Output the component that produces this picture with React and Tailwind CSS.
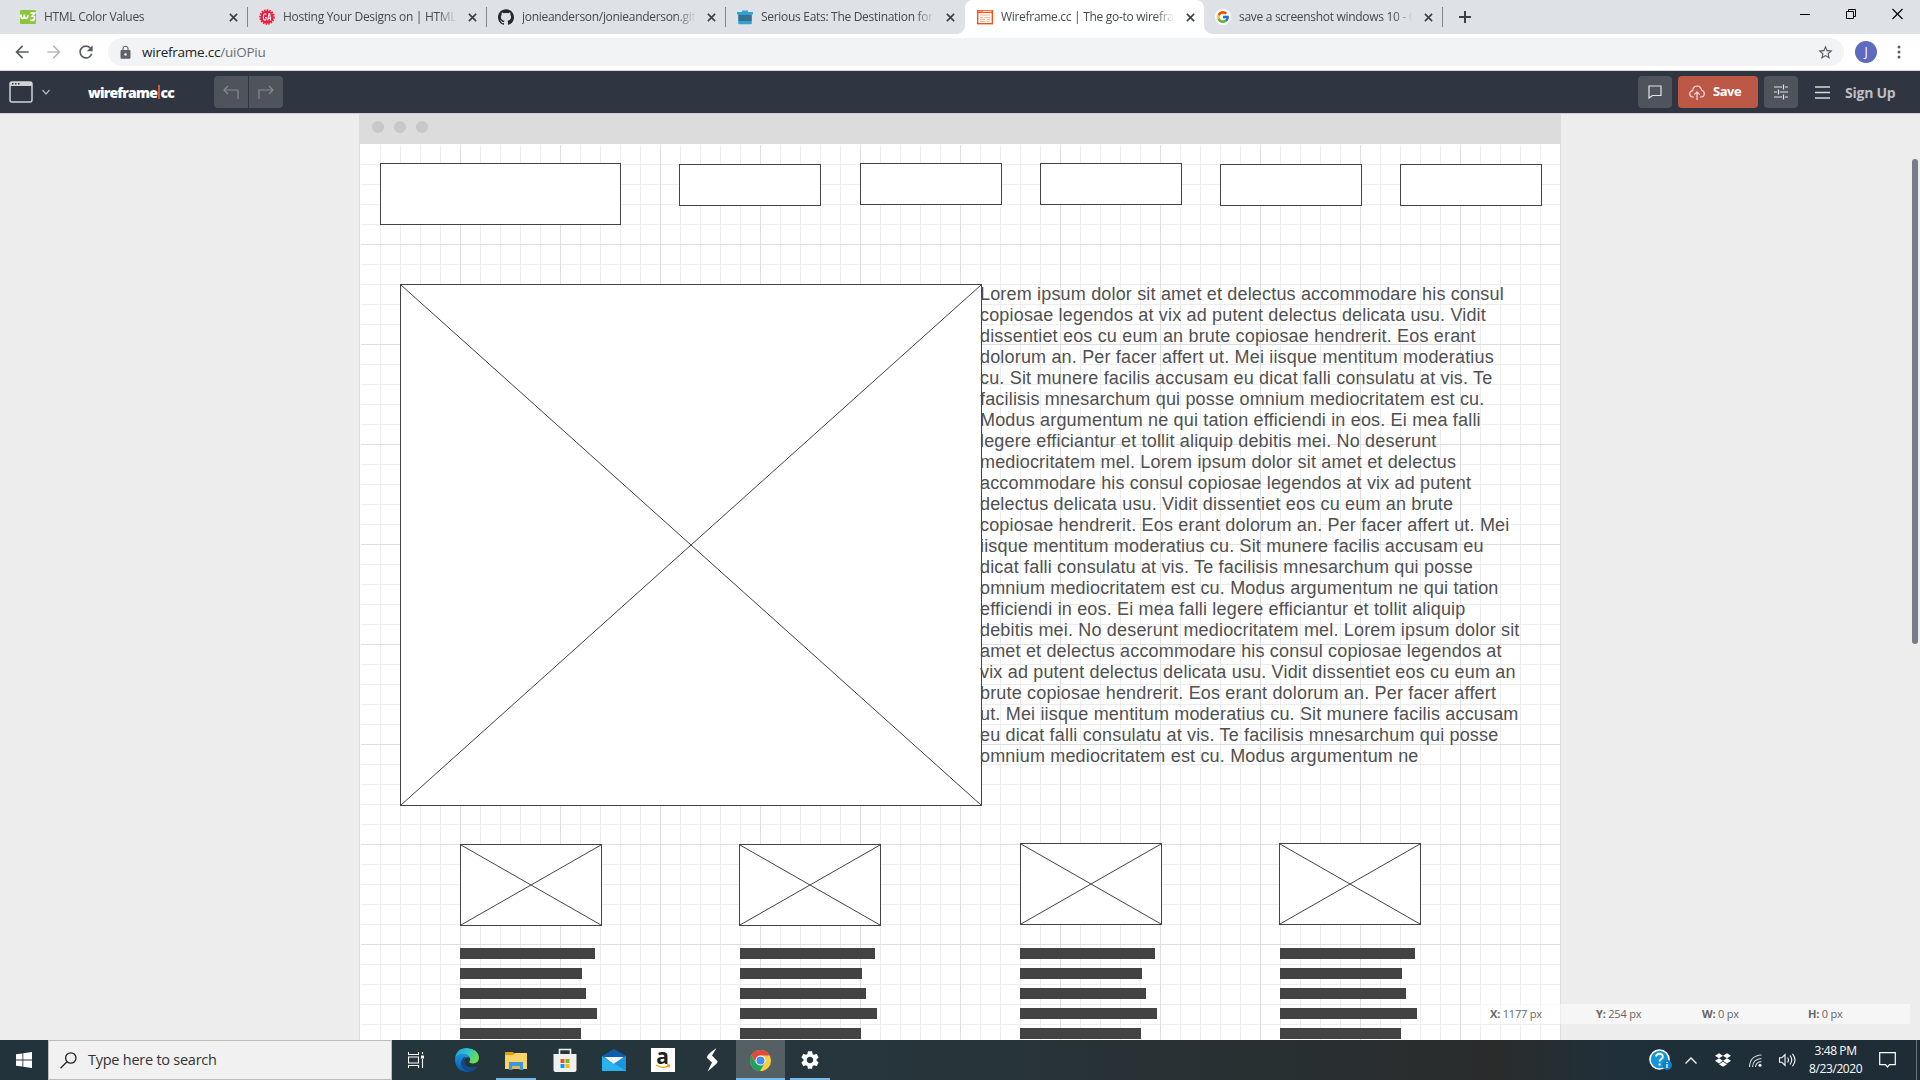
import React from "react";
import { SiDropbox, SiGithub } from "react-icons/si";
import { MdSettings, MdStarBorder, MdRefresh, MdArrowBack, MdArrowForward, MdLock } from "react-icons/md";
import { FcGoogle } from "react-icons/fc";

const TABS = [
  { icon: "w3", title: "HTML Color Values" },
  { icon: "ga", title: "Hosting Your Designs on | HTML," },
  { icon: "gh", title: "jonieanderson/jonieanderson.gith" },
  { icon: "se", title: "Serious Eats: The Destination for" },
  { icon: "wf", title: "Wireframe.cc | The go-to wirefran", active: true },
  { icon: "go", title: "save a screenshot windows 10 - G" },
];

const NAV_BOXES = [
  [380, 163, 241, 62],
  [679, 164, 142, 42],
  [860, 163, 142, 42],
  [1040, 163, 142, 42],
  [1220, 164, 142, 42],
  [1400, 164, 142, 42],
];

const IMAGES = [
  [400, 284, 582, 522],
  [460, 844, 142, 82],
  [739, 844, 142, 82],
  [1020, 843, 142, 82],
  [1279, 843, 142, 82],
];

const BAR_COLUMNS = [460, 740, 1020, 1280];
const BAR_WIDTHS = [135, 122, 126, 137, 121];

const LOREM = [
  "Lorem ipsum dolor sit amet et delectus accommodare his consul",
  "copiosae legendos at vix ad putent delectus delicata usu. Vidit",
  "dissentiet eos cu eum an brute copiosae hendrerit. Eos erant",
  "dolorum an. Per facer affert ut. Mei iisque mentitum moderatius",
  "cu. Sit munere facilis accusam eu dicat falli consulatu at vis. Te",
  "facilisis mnesarchum qui posse omnium mediocritatem est cu.",
  "Modus argumentum ne qui tation efficiendi in eos. Ei mea falli",
  "legere efficiantur et tollit aliquip debitis mei. No deserunt",
  "mediocritatem mel. Lorem ipsum dolor sit amet et delectus",
  "accommodare his consul copiosae legendos at vix ad putent",
  "delectus delicata usu. Vidit dissentiet eos cu eum an brute",
  "copiosae hendrerit. Eos erant dolorum an. Per facer affert ut. Mei",
  "iisque mentitum moderatius cu. Sit munere facilis accusam eu",
  "dicat falli consulatu at vis. Te facilisis mnesarchum qui posse",
  "omnium mediocritatem est cu. Modus argumentum ne qui tation",
  "efficiendi in eos. Ei mea falli legere efficiantur et tollit aliquip",
  "debitis mei. No deserunt mediocritatem mel. Lorem ipsum dolor sit",
  "amet et delectus accommodare his consul copiosae legendos at",
  "vix ad putent delectus delicata usu. Vidit dissentiet eos cu eum an",
  "brute copiosae hendrerit. Eos erant dolorum an. Per facer affert",
  "ut. Mei iisque mentitum moderatius cu. Sit munere facilis accusam",
  "eu dicat falli consulatu at vis. Te facilisis mnesarchum qui posse",
  "omnium mediocritatem est cu. Modus argumentum ne",
];

function Favicon({ kind }) {
  if (kind === "w3")
    return (
      <svg viewBox="0 0 16 16" className="size-4 shrink-0">
        <rect y="1" width="16" height="14" rx="1" fill="#8ac53e" />
        <path d="M1 5.5v1.8q0 2 1.7 2 1.6 0 1.6-2V5.5M4.3 7.3q0 2 1.7 2 1.8 0 2-3M10.5 4.2h4l-2.3 2.9q2.6 0 2.3 2.4-.4 2.4-4.2 1.6" fill="none" stroke="#fff" strokeWidth="1.7" />
      </svg>
    );
  if (kind === "ga")
    return (
      <svg viewBox="0 0 16 16" className="size-4 shrink-0">
        <circle cx="8" cy="8" r="6.6" fill="#f5193b" />
        <circle cx="8" cy="8" r="7" fill="none" stroke="#f5193b" strokeWidth="1.6" strokeDasharray="1.5 1.2" />
        <path d="M7.2 5.4Q6.8 4.6 5.8 4.7 4.4 5 4.4 8t1.3 3.3q1.5 0 1.5-2.8H6M8.8 11.5l1.1-7h.8l1.1 7M9 9.2h2.5" fill="none" stroke="#fff" strokeWidth="1.1" />
      </svg>
    );
  if (kind === "gh") return <SiGithub className="size-4 shrink-0 text-[#24292e]" />;
  if (kind === "se")
    return (
      <svg viewBox="0 0 16 16" className="size-4 shrink-0">
        <path d="M5 1.5h6V3h5v2.5h-1.2V14q0 1.2-1 1.2H2.2q-1 0-1-1.2V5.500H0V3h5z" fill="#33a1cf" />
        <path d="M1.500 6h13v6h-13z" fill="#35708f" />
      </svg>
    );
  if (kind === "wf")
    return (
      <svg viewBox="0 0 16 16" className="size-4 shrink-0">
        <rect x=".7" y="1.700" width="14.600" height="13" fill="#fff" stroke="#fc4c12" strokeWidth="1.400" />
        <path d="M0 1h16v3H0z" fill="#fc4c12" />
        <path d="M1.500 2.300h1M3.500 2.300h1M5.500 2.300h9" stroke="#fff" strokeWidth="1" />
        <path d="M3 6h10M3 8.500h3M7.500 8.500h5.500M3 10.500h5M9.500 10.500h3.500M3 12.500h5M9.500 12.500h2.500" stroke="#fbb196" strokeWidth="1.100" />
      </svg>
    );
  return (
    <span className="flex size-4 shrink-0 items-center justify-center rounded-full bg-white">
      <FcGoogle className="size-3.5" />
    </span>
  );
}

function CloseX() {
  return (
    <svg viewBox="0 0 10 10" className="size-[9px] shrink-0">
      <path d="M1 1l8 8M9 1L1 9" stroke="#3c4043" strokeWidth="1.800" />
    </svg>
  );
}

function TabStrip() {
  return (
    <div className="flex h-[34px] bg-[#dee1e6]">
      <div className="flex pl-[9px]">
        {TABS.map((t, i) => {
          const divider = i !== 3 && !t.active;
          return (
            <div key={t.icon} className={t.active ? "relative flex h-[34px] w-[239px] items-center rounded-t-lg bg-white pr-3 pl-3" : "relative flex h-[34px] w-[239px] items-center pr-3 pl-[11px]"}>
              {t.active && (
                <>
                  <span className="absolute bottom-0 -left-2 size-2 bg-[radial-gradient(circle_at_0_0,#dee1e6_7.500px,#fff_8px)]" />
                  <span className="absolute -right-2 bottom-0 size-2 bg-[radial-gradient(circle_at_100%_0,#dee1e6_7.500px,#fff_8px)]" />
                </>
              )}
              <Favicon kind={t.icon} />
              <span className="ml-2 w-[177px] shrink-0 [mask-image:linear-gradient(to_right,#000_154px,transparent_174px)] text-[12px] tracking-[-0.3px] whitespace-nowrap text-[#45494d]">{t.title}</span>
              <span className="ml-2"><CloseX /></span>
              {divider && <span className="absolute top-[7px] right-0 h-5 w-px bg-[#83868b]" />}
            </div>
          );
        })}
      </div>
      <svg viewBox="0 0 12 12" className="mt-[11px] ml-[16px] size-3">
        <path d="M6 0v12M0 6h12" stroke="#3c4043" strokeWidth="2" />
      </svg>
      <div className="ml-auto flex items-start gap-[35px] pt-2 pr-[17px]">
        <svg viewBox="0 0 11 12" className="h-3 w-[11px]"><path d="M0 6.500h10" stroke="#000" /></svg>
        <svg viewBox="0 0 11 12" className="h-3 w-[11px]"><path d="M.5 3.500h7v7h-7zM2.500 3.500v-2h7v7h-2" fill="none" stroke="#000" /></svg>
        <svg viewBox="0 0 11 12" className="h-3 w-[11px]"><path d="M.5 1l10 10M10.500 1l-10 10" stroke="#000" strokeWidth="1.100" /></svg>
      </div>
    </div>
  );
}

function AddressBar() {
  return (
    <div className="flex h-[37px] items-center border-b border-[#d5d9de] bg-white">
      <MdArrowBack className="ml-[12px] size-5 text-[#5a5d61]" />
      <MdArrowForward className="ml-3 size-5 text-[#b9bbbe]" />
      <MdRefresh className="ml-3 size-5 text-[#5a5d61]" />
      <div className="ml-3 flex h-7 w-[1736px] items-center rounded-full bg-[#f1f3f4] pr-2.5 pl-[10px]">
        <MdLock className="size-[15px] text-[#5f6368]" />
        <span className="ml-[9px] text-[13.5px] tracking-[-0.24px] text-[#202124]">wireframe.cc<span className="text-[#6b6f74]">/uiOPiu</span></span>
        <MdStarBorder className="ml-auto size-[17px] text-[#5a5d61]" />
      </div>
      <span className="ml-[11px] flex size-[22px] items-center justify-center rounded-full bg-[#5c6bc0] text-[12px] text-white">J</span>
      <svg viewBox="0 0 4 14" className="ml-5 h-3.5 w-1 fill-[#5a5d61]"><circle cx="2" cy="2" r="1.500" /><circle cx="2" cy="7" r="1.500" /><circle cx="2" cy="12" r="1.500" /></svg>
    </div>
  );
}

function AppToolbar() {
  return (
    <div className="flex h-[42px] items-center bg-[#2f3541] text-white">
      <svg viewBox="0 0 24 22" className="ml-[9px] h-[22px] w-6">
        <rect x="1" y="1" width="22" height="20" rx="2" fill="none" stroke="#d2d3d5" strokeWidth="1.500" />
        <path d="M1 3q0-2 2-2h18q2 0 2 2v2H1z" fill="#d2d3d5" />
        <path d="M3 2.800h1.500M6 2.800h1.500M9 2.800h1.500" stroke="#2f3541" strokeWidth="1.500" />
      </svg>
      <svg viewBox="0 0 8 6" className="ml-[9px] h-1.5 w-2"><path d="M.5 1L4 5l3.500-4" fill="none" stroke="#b5b7bb" strokeWidth="1.200" /></svg>
      <span className="ml-[38px] flex w-[86px] items-center text-[14px] font-extrabold tracking-[-0.8px]">
        wireframe<span className="mx-[1px] h-[14px] w-[2px] bg-[#d9533f]" />cc
      </span>
      <div className="ml-10 flex h-8 gap-px">
        <span className="flex w-[34px] items-center justify-center rounded-l bg-[#4f535c]">
          <svg viewBox="0 0 16 16" className="mt-px size-4" fill="none" stroke="#898b90" strokeWidth="1.200"><path d="M15 14V5H1M5 1L1 5l4 4" /></svg>
        </span>
        <span className="flex w-[34px] items-center justify-center rounded-r bg-[#4f535c]">
          <svg viewBox="0 0 16 16" className="mt-px size-4" fill="none" stroke="#898b90" strokeWidth="1.200"><path d="M1 14V5h14M11 1l4 4-4 4" /></svg>
        </span>
      </div>
      <span className="ml-auto flex h-8 w-[34px] items-center justify-center rounded bg-[#4f535c]">
        <svg viewBox="0 0 14 14" className="size-3.5" fill="none" stroke="#e4e4e6" strokeWidth="1.200"><path d="M1 1h12v9.500H4.500L1 13z" /></svg>
      </span>
      <span className="ml-1.5 flex h-8 w-20 items-center rounded bg-[#bd5847] pl-[11px] text-[13px] font-bold tracking-[-0.5px]">
        <svg viewBox="0 0 16 15" className="mr-[8px] h-[15px] w-4" fill="none" stroke="#f0dedb" strokeWidth="1.200"><path d="M5 12H3.500Q.7 11.500.7 8.700.8 6 3.600 5.600 4.400 1 8.300 1q3.500.2 4.200 4 2.800 1 2.800 3.700 0 3-3.300 3.300h-1M8 15V7M5.300 9.600L8 6.900l2.700 2.700" /></svg>
        Save
      </span>
      <span className="ml-1.5 flex h-8 w-[34px] items-center justify-center rounded bg-[#4f535c]">
        <svg viewBox="0 0 14 16" className="h-4 w-3.5" fill="none" stroke="#e4e4e6" strokeWidth="1.200"><path d="M0 3h8M11 3h3M9.500.500v5M0 8h3M6 8h8M4.500 5.500v5M0 13h8M11 13h3M9.500 10.500v5" /></svg>
      </span>
      <svg viewBox="0 0 15 13" className="ml-[17px] h-[13px] w-[15px]"><path d="M0 1h15M0 6.500h15M0 12h15" stroke="#d8d9db" strokeWidth="1.300" /></svg>
      <span className="mr-[23px] ml-[15px] w-[52px] text-[14px] font-bold tracking-[-0.25px] whitespace-nowrap text-[#bdbfc3]">Sign Up</span>
    </div>
  );
}

/* The overlay starts at the window's top, so shapes use window coordinates. */
function Canvas() {
  return (
    <main className="relative flex h-[927px] justify-center overflow-hidden border-t border-[#d4cfdb] bg-[#ededed]">
      <div className="flex w-[1202px] flex-col border-x border-[#dcdcdc] bg-white">
        <div className="flex h-[30px] shrink-0 gap-[10px] bg-[#dcdcdc] pt-[7px] pl-[12px]">
          <span className="size-3 rounded-full bg-[#c8c8c8]" />
          <span className="size-3 rounded-full bg-[#c8c8c8]" />
          <span className="size-3 rounded-full bg-[#c8c8c8]" />
        </div>
        <svg className="mt-px w-full grow" viewBox="360 145 1200 895">
          <defs>
            <pattern id="minor" x="360" y="144" width="20" height="20" patternUnits="userSpaceOnUse">
              <path d="M0 .5h20M.5 0v20" stroke="#ededed" />
            </pattern>
            <pattern id="major" x="360" y="144" width="100" height="100" patternUnits="userSpaceOnUse">
              <path d="M0 .5h100M.5 0v100" stroke="#dfdfdf" />
            </pattern>
          </defs>
          <rect x="361" y="145" width="1199" height="895" fill="url(#minor)" />
          <rect x="361" y="145" width="1199" height="895" fill="url(#major)" />
        </svg>
      </div>
      <div className="absolute -top-[114px] left-0 h-[1040px] w-full">
        {NAV_BOXES.map(([x, y, w, h]) => (
          <div key={x} className="absolute border border-[#434343] bg-white" style={{ left: x, top: y, width: w, height: h }} />
        ))}
        {IMAGES.map(([x, y, w, h]) => (
          <svg key={x} className="absolute border border-[#434343] bg-white" style={{ left: x, top: y, width: w, height: h }}>
            <path d={`M0 0L${w - 2} ${h - 2}M${w - 2} 0L0 ${h - 2}`} stroke="#434343" />
          </svg>
        ))}
        {BAR_COLUMNS.map((x) => (
          <div key={x} className="absolute top-[948px] flex flex-col gap-[9px]" style={{ left: x }}>
            {BAR_WIDTHS.map((w, i) => (
              <div key={i} className="h-[11px] bg-[#434343]" style={{ width: w }} />
            ))}
          </div>
        ))}
        <p className="absolute top-[284px] left-[980px] font-['Liberation_Sans',Arial,sans-serif] text-[18px] leading-[21px] tracking-[0.174px] whitespace-nowrap text-[#505050]">
          {LOREM.map((l, i) => (
            <span key={i} className="block">{l}</span>
          ))}
        </p>
        <div className="absolute top-[1004px] left-[1480px] grid h-5 w-[430px] grid-cols-[106px_106px_106px_1fr] items-center bg-white/50 pl-[10px] text-[11px] tracking-[-0.2px] text-[#666]">
          <span><b>X:</b> 1177 px</span>
          <span><b>Y:</b> 254 px</span>
          <span><b>W:</b> 0 px</span>
          <span><b>H:</b> 0 px</span>
        </div>
        <div className="absolute top-[159px] left-[1912px] h-[485px] w-1.5 rounded-full bg-[#7a7d86]" />
      </div>
    </main>
  );
}

const AppIcons = {
  edge: (
    <svg viewBox="0 0 24 24" className="size-6">
      <defs>
        <linearGradient id="e1" x1="0" y1="0" x2="1" y2=".4"><stop stopColor="#1f9fe0" /><stop offset=".6" stopColor="#34c6c8" /><stop offset="1" stopColor="#6be04c" /></linearGradient>
        <linearGradient id="e2" x1="0" y1="0" x2="0" y2="1"><stop stopColor="#1c93e2" /><stop offset="1" stopColor="#0c59a4" /></linearGradient>
      </defs>
      <path d="M0 11Q1 0 12 0q11 .8 12 9.500 0 5.500-6 6-3.500 0-3.800-1.700 1.800-1.700.3-4.500Q12 6 7.500 6 2 6.500 0 11z" fill="url(#e1)" />
      <path d="M0 11Q2.500 5.800 8 6q5 .3 6.500 3.700Q11 8.500 9.300 11.500 8 15.500 12 18.500q4 2.500 10 .2Q18.500 24 12 24 0 23 0 11z" fill="url(#e2)" />
      <path d="M8.500 9.500Q4 14.500 7.500 20q2.500 3 6.500 3.800 5-.5 8-5.100-6 2.300-10-.2-4-3-2.700-7 .5-1.500 1.700-2-1.500-.8-2.500 0z" fill="#104a87" />
    </svg>
  ),
  files: (
    <svg viewBox="0 0 24 20" className="mt-px h-5 w-6">
      <path d="M1 1h8l2 2H22v4H1z" fill="#e19d12" />
      <path d="M1 4h8l2-2h12v16H1z" fill="#fcd366" />
      <path d="M5 11h14v8h-3.500v-4h-7v4H5z" fill="#3f94dc" />
      <path d="M8.500 15h7v3h-7z" fill="#e8b94a" />
    </svg>
  ),
  store: (
    <svg viewBox="0 0 24 24" className="size-6">
      <path d="M6.500 7V1.500h11V7" fill="none" stroke="#f2f2f2" strokeWidth="1.600" />
      <path d="M.5 6h23v16q0 2-2 2h-19q-2 0-2-2z" fill="#f0f0f0" />
      <path d="M7.500 11h4v4h-4z" fill="#f25022" /><path d="M12.500 11h4v4h-4z" fill="#7fba00" />
      <path d="M7.500 16h4v4h-4z" fill="#00a4ef" /><path d="M12.500 16h4v4h-4z" fill="#ffb900" />
    </svg>
  ),
  mail: (
    <svg viewBox="0 0 24 22" className="h-[22px] w-6">
      <path d="M0 7L12 0l12 7v4H0z" fill="#0a5fae" />
      <path d="M2.500 8h19L12 16z" fill="#f3f3f3" />
      <path d="M0 7l12 8 12-8v15H0z" fill="#28b3ef" />
      <path d="M12 14.500L24 7v15z" fill="#1a93e0" />
    </svg>
  ),
  amazon: (
    <span className="relative flex size-6 justify-center bg-white">
      <span className="-mt-[4px] text-[21px] leading-6 font-bold text-[#221f1f]">a</span>
      <svg viewBox="0 0 16 5" className="absolute bottom-[3px] left-1 h-[5px] w-4"><path d="M1 1q7 4.500 13 .5M12 .8l2.500.3-.7 2.400" fill="none" stroke="#f90" strokeWidth="1.300" /></svg>
    </span>
  ),
  bolt: (
    <svg viewBox="0 0 12 24" className="h-6 w-3 fill-white"><path d="M10.500 0L5 4Q.5 7.500 1 10l5 4.500L1.500 23.500 8 18q3.500-3 3.700-4.500L6 7.500z" /></svg>
  ),
  chrome: (
    <svg viewBox="0 0 24 24" className="size-[23px]">
      <circle cx="12" cy="12" r="11" fill="#ffcd42" />
      <path d="M2.500 6.500A11 11 0 0 1 21.600 6.700H12L7.400 14.600z" fill="#e04b3d" />
      <path d="M2.500 6.400A11 11 0 0 0 11.500 23l5-8.300-9.200.2z" fill="#1da15f" />
      <circle cx="12" cy="12" r="5.300" fill="#fff" /><circle cx="12" cy="12" r="4.200" fill="#4a8af4" />
    </svg>
  ),
  settings: <MdSettings className="size-[22px] text-white" />,
};

function Taskbar() {
  return (
    <footer className="flex h-10 bg-[linear-gradient(to_right,#22333b,#26363c_45%,#2a2c2c_78%,#20303a_84%,#1d2c35)] text-white">
      <span className="flex w-12 items-center justify-center">
        <svg viewBox="0 0 16 16" className="size-4 fill-white"><path d="M0 2.300L6.500 1.400v6.200H0zM7.300 1.300L16 0v7.600H7.300zM0 8.400h6.500v6.200L0 13.700zM7.300 8.400H16V16l-8.700-1.300z" /></svg>
      </span>
      <div className="flex w-[344px] items-center border border-[#bdbdbd] bg-[#f1f1f1] pl-[11px]">
        <svg viewBox="0 0 17 17" className="size-[17px]" fill="none" stroke="#222" strokeWidth="1.300"><circle cx="10.800" cy="6" r="5.200" /><path d="M7 9.800L.5 16.300" /></svg>
        <span className="ml-[11px] text-[14.5px] tracking-[-0.25px] text-[#333]">Type here to search</span>
      </div>
      <span className="mr-[2px] flex w-12 items-center justify-center">
        <svg viewBox="0 0 16 16" className="size-4" fill="none" stroke="#fff" strokeWidth="1.100"><path d="M.5 0v2.500h10V0M.5 5h10v6H.5zM.5 16v-2.500h10V16M14.500 0v2M14.500 7v9" /><path d="M13 3.500h3v3h-3z" fill="#fff" stroke="none" /></svg>
      </span>
      {Object.entries(AppIcons).map(([k, icon]) => (
        <span key={k} className={k === "chrome" ? "relative flex w-[49px] items-center justify-center bg-[#556065]" : "relative flex w-[49px] items-center justify-center"}>
          {icon}
          {(k === "files" || k === "settings") && <span className="absolute bottom-0 h-0.5 w-10 bg-[#76b9ed]" />}
          {k === "chrome" && <span className="absolute bottom-0 h-0.5 w-full bg-[#76b9ed]" />}
        </span>
      ))}
      <div className="ml-auto flex items-center">
        <svg viewBox="0 0 23 22" className="h-[22px] w-[23px]"><circle cx="10.500" cy="10.500" r="9.500" fill="#1296d8" stroke="#fff" strokeWidth="1.600" /><path d="M7 7.500Q7.500 4.700 10.500 4.700t3.300 2.700q0 1.600-1.600 2.600t-1.600 2.500M10.600 14.500v2" fill="none" stroke="#fff" strokeWidth="2" /><circle cx="18" cy="16" r="5" fill="#1082c4" /><path d="M18 13v1M18 15v4" stroke="#fff" strokeWidth="1.300" /></svg>
        <svg viewBox="0 0 12 7" className="ml-[13px] h-[7px] w-3"><path d="M.5 6.500L6 1l5.500 5.500" fill="none" stroke="#fff" strokeWidth="1.300" /></svg>
        <SiDropbox className="ml-[18px] size-4" />
        <svg viewBox="0 0 13 13" className="ml-[18px] size-[13px]" fill="none" stroke="#d5d9db" strokeWidth="1.100"><path d="M.5 13Q1 1.500 12.500 1M3.500 13q.5-8 9-8.500M6.500 13q.5-5 6-5.500" /><circle cx="11" cy="11.300" r="1.500" fill="#fff" stroke="none" /></svg>
        <svg viewBox="0 0 17 14" className="ml-[17px] h-3.5 w-[17px]" fill="none" stroke="#fff" strokeWidth="1.100"><path d="M.5 4.800h2.300L6 1.500v11L2.800 9.200H.5zM8.500 4.500q2 2.500 0 5M11 2.500q3.500 4.500 0 9M13.500.8q5 6.200 0 12.400" /></svg>
        <span className="ml-[13px] w-[53px] text-center text-[12px] leading-[18px] tracking-[-0.4px] whitespace-nowrap">3:48 PM<br />8/23/2020</span>
        <svg viewBox="0 0 17 16" className="ml-[17px] h-4 w-[17px]" fill="none" stroke="#fff" strokeWidth="1.200"><path d="M.7.700h15.600v12H10.500L8.500 15l-2-2.300H.7z" /></svg>
        <span className="ml-5 h-10 w-px bg-[#6a757b]" />
        <span className="w-[3px]" />
      </div>
    </footer>
  );
}

export default function App() {
  return (
    <div className="h-[1080px] w-[1920px] overflow-hidden font-['Open_Sans','Noto_Sans',sans-serif]">
      <TabStrip />
      <AddressBar />
      <AppToolbar />
      <Canvas />
      <Taskbar />
    </div>
  );
}
